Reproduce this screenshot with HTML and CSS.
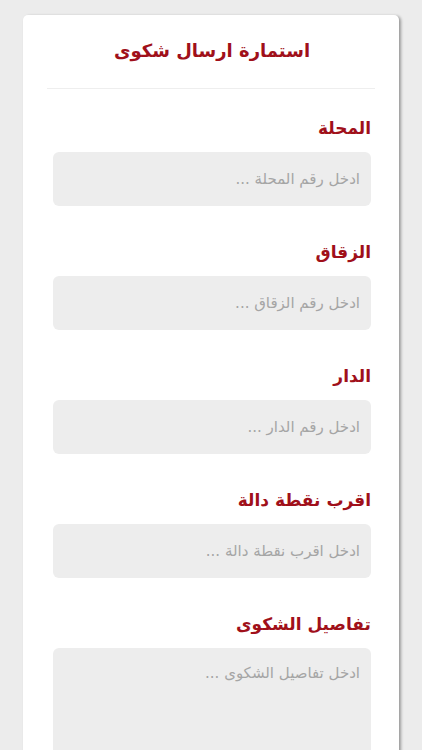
FILE: index.html
```html
<!DOCTYPE html>
<html lang="ar" dir="rtl">
<head>
    <meta charset="UTF-8">
    <meta name="viewport" content="width=device-width, initial-scale=1.0">
    <title>استمارة ارسال شكوى</title>
    <link rel="stylesheet" href="styles.css">
</head>
<body>
    <div class="card">
        <h1 class="card-title">استمارة ارسال شكوى</h1>
        <hr class="divider">

        <div class="form-group">
            <label for="mahala">المحلة</label>
            <input type="text" id="mahala" placeholder="ادخل رقم المحلة ...">
        </div>
        <div class="form-group">
            <label for="zuqaq">الزقاق</label>
            <input type="text" id="zuqaq" placeholder="ادخل رقم الزقاق ...">
        </div>
        <div class="form-group">
            <label for="dar">الدار</label>
            <input type="text" id="dar" placeholder="ادخل رقم الدار ...">
        </div>
        <div class="form-group">
            <label for="nuqta">اقرب نقطة دالة</label>
            <input type="text" id="nuqta" placeholder="ادخل اقرب نقطة دالة ...">
        </div>
        <div class="form-group">
            <label for="tafasil">تفاصيل الشكوى</label>
            <textarea id="tafasil" placeholder="ادخل تفاصيل الشكوى ..."></textarea>
        </div>
    </div>
</body>
</html>
```

FILE: styles.css
```css
body {
    font-family: 'DejaVu Sans', sans-serif;
    margin: 0;
    padding: 15px 23px 0;
    background-color: #ECECEC;
    color: #333;
}
.card {
    background-color: white;
    border-radius: 5px;
    box-shadow: 2px 1px 3px rgba(0,0,0,0.35);
    padding: 0 28px 40px 30px;
    min-height: 760px;
}
.card-title {
    margin: 0;
    padding: 25px 0 27px;
    text-align: center;
    font-size: 18px;
    font-weight: bold;
    color: #A0101A; /* احمر */
}
.divider {
    border: none;
    border-top: 1px solid #EEE;
    margin: 0 -4px 0 -6px;
}
.form-group {
    margin-top: 29px;
}
.form-group + .form-group {
    margin-top: 36px;
}
label {
    display: block;
    margin: 0 0 14px 0;
    font-size: 17px;
    font-weight: bold;
    color: #A0101A;
}
input[type="text"],
textarea {
    display: block;
    width: 100%;
    box-sizing: border-box;
    height: 54px;
    padding: 0 11px;
    border: none;
    border-radius: 6px;
    background-color: #EDEDED;
    font-family: 'DejaVu Sans', sans-serif;
    font-size: 15px;
    color: #333;
}
textarea {
    height: 130px;
    padding-top: 16px;
    resize: none;
}
::placeholder {
    color: #A5A5A5;
}
```
